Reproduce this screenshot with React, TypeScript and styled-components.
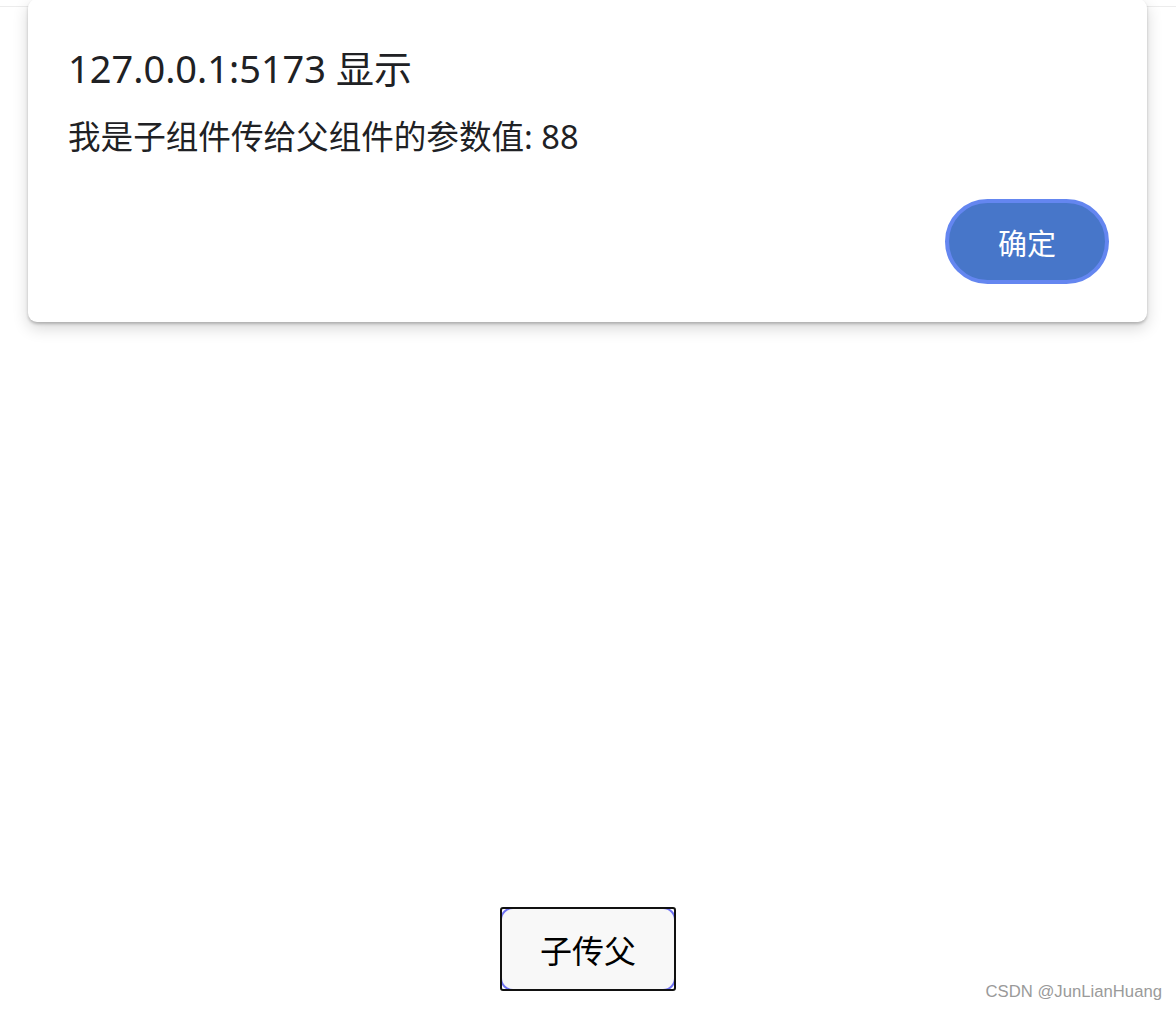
import React from "react";
import styled, { createGlobalStyle } from "styled-components";

const GlobalStyle = createGlobalStyle`
  html {
    background: #ffffff;
  }
  body {
    margin: 0;
    padding: 0;
    font-family: "Noto Sans", "Noto Sans CJK SC", sans-serif;
  }
`;

const Page = styled.div`
  position: relative;
  width: 1176px;
  height: 1012px;
  overflow: hidden;
`;

const TopEdge = styled.div`
  height: 6px;
  border-bottom: 1px solid #ececec;
`;

const Main = styled.main`
  display: flex;
  flex-direction: column;
  align-items: center;
  padding-top: 900px;
`;

const ChildButton = styled.button`
  position: relative;
  width: 176px;
  height: 84px;
  border: 2px solid #111111;
  border-radius: 3px;
  background: transparent;
  font-family: "Noto Sans CJK SC", sans-serif;
  font-size: 32px;
  color: #000000;
  padding: 0;
  cursor: pointer;

  &::before {
    content: "";
    position: absolute;
    inset: -2px;
    z-index: -1;
    border: 2px solid #6f72f2;
    border-radius: 13px;
    background: #f8f8f8;
  }
`;

const Dialog = styled.div`
  position: absolute;
  top: -1px;
  left: 28px;
  width: 1119px;
  height: 323px;
  box-sizing: border-box;
  background: #ffffff;
  border-radius: 9px;
  box-shadow: 0 2px 3px rgba(0, 0, 0, 0.22), 0 6px 16px rgba(0, 0, 0, 0.16);
  padding: 46px 38px 38px 40px;
  display: flex;
  flex-direction: column;
`;

const Title = styled.div`
  font-family: "Noto Sans", "Noto Sans CJK SC", sans-serif;
  font-size: 38px;
  line-height: 46px;
  color: #202124;
`;

const Message = styled.div`
  margin-top: 25px;
  font-family: "Noto Sans", "Noto Sans CJK SC", sans-serif;
  font-size: 32.6px;
  line-height: 42px;
  color: #202124;
`;

const Actions = styled.div`
  margin-top: auto;
  display: flex;
  justify-content: flex-end;
`;

const OkButton = styled.button`
  width: 164px;
  height: 85px;
  box-sizing: border-box;
  border: 4px solid #6486f0;
  border-radius: 43px;
  background: #4776c9;
  color: #ffffff;
  font-family: "Noto Sans CJK SC", sans-serif;
  font-size: 29px;
  padding: 0;
  cursor: pointer;
`;

const Watermark = styled.div`
  position: absolute;
  right: 14px;
  bottom: 10px;
  font-family: "Liberation Sans", Arial, sans-serif;
  font-size: 16.7px;
  color: #9a9a9a;
`;

export default function App() {
  return (
    <>
      <GlobalStyle />
      <Page>
        <TopEdge />
        <Main>
          <ChildButton>子传父</ChildButton>
        </Main>
        <Dialog>
          <Title>127.0.0.1:5173 显示</Title>
          <Message>我是子组件传给父组件的参数值: 88</Message>
          <Actions>
            <OkButton>确定</OkButton>
          </Actions>
        </Dialog>
        <Watermark>CSDN @JunLianHuang</Watermark>
      </Page>
    </>
  );
}
